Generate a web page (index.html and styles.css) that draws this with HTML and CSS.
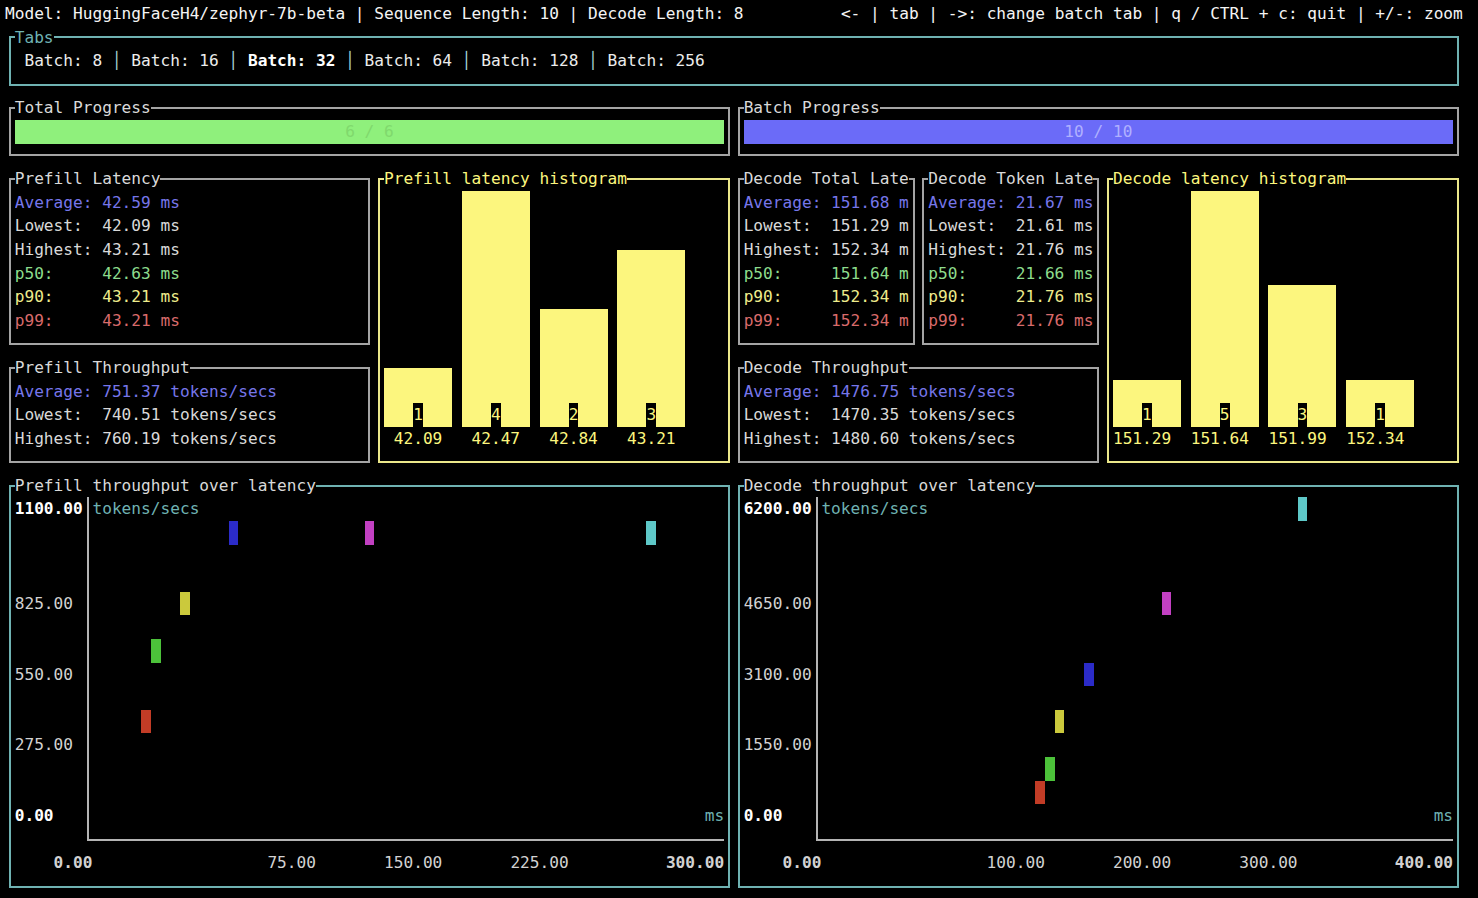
FILE: index.html
```html
<!DOCTYPE html>
<html lang="en">
<head>
<meta charset="utf-8">
<title>text-generation-benchmark</title>
<link rel="stylesheet" href="styles.css">
</head>
<body>
<div class="term">
  <div class="header">
    <span>Model: HuggingFaceH4/zephyr-7b-beta | Sequence Length: 10 | Decode Length: 8</span>
    <span>&lt;- | tab | -&gt;: change batch tab | q / CTRL + c: quit | +/-: zoom</span>
  </div>

  <section class="box teal tabs">
    <div class="title">Tabs</div>
    <div class="line"> Batch: 8 <span class="div">│</span> Batch: 16 <span class="div">│</span> <b class="sel">Batch: 32</b> <span class="div">│</span> Batch: 64 <span class="div">│</span> Batch: 128 <span class="div">│</span> Batch: 256 </div>
  </section>

  <section class="box total-prog">
    <div class="title">Total Progress</div>
    <div class="gauge green">6 / 6</div>
  </section>

  <section class="box batch-prog">
    <div class="title">Batch Progress</div>
    <div class="gauge blue">10 / 10</div>
  </section>

  <section class="box p-lat">
    <div class="title">Prefill Latency</div>
    <div class="line avg">Average: 42.59 ms</div>
    <div class="line">Lowest:  42.09 ms</div>
    <div class="line">Highest: 43.21 ms</div>
    <div class="line p50">p50:     42.63 ms</div>
    <div class="line p90">p90:     43.21 ms</div>
    <div class="line p99">p99:     43.21 ms</div>
  </section>

  <section class="box p-thr">
    <div class="title">Prefill Throughput</div>
    <div class="line avg">Average: 751.37 tokens/secs</div>
    <div class="line">Lowest:  740.51 tokens/secs</div>
    <div class="line">Highest: 760.19 tokens/secs</div>
  </section>

  <section class="box yellow p-hist">
    <div class="title">Prefill latency histogram</div>
    <div class="hist">
      <div class="hcol"><div class="harea"><div class="hbar" style="height:59px"><span class="hval">1</span></div></div><div class="hlabel l5">42.09</div></div>
      <div class="hcol"><div class="harea"><div class="hbar" style="height:236px"><span class="hval">4</span></div></div><div class="hlabel l5">42.47</div></div>
      <div class="hcol"><div class="harea"><div class="hbar" style="height:118px"><span class="hval">2</span></div></div><div class="hlabel l5">42.84</div></div>
      <div class="hcol"><div class="harea"><div class="hbar" style="height:177px"><span class="hval">3</span></div></div><div class="hlabel l5">43.21</div></div>
    </div>
  </section>

  <section class="box d-tot">
    <div class="title">Decode Total Late</div>
    <div class="line avg">Average: 151.68 m</div>
    <div class="line">Lowest:  151.29 m</div>
    <div class="line">Highest: 152.34 m</div>
    <div class="line p50">p50:     151.64 m</div>
    <div class="line p90">p90:     152.34 m</div>
    <div class="line p99">p99:     152.34 m</div>
  </section>

  <section class="box d-tok">
    <div class="title">Decode Token Late</div>
    <div class="line avg">Average: 21.67 ms</div>
    <div class="line">Lowest:  21.61 ms</div>
    <div class="line">Highest: 21.76 ms</div>
    <div class="line p50">p50:     21.66 ms</div>
    <div class="line p90">p90:     21.76 ms</div>
    <div class="line p99">p99:     21.76 ms</div>
  </section>

  <section class="box d-thr">
    <div class="title">Decode Throughput</div>
    <div class="line avg">Average: 1476.75 tokens/secs</div>
    <div class="line">Lowest:  1470.35 tokens/secs</div>
    <div class="line">Highest: 1480.60 tokens/secs</div>
  </section>

  <section class="box yellow d-hist">
    <div class="title">Decode latency histogram</div>
    <div class="hist">
      <div class="hcol"><div class="harea"><div class="hbar" style="height:47.2px"><span class="hval">1</span></div></div><div class="hlabel">151.29</div></div>
      <div class="hcol"><div class="harea"><div class="hbar" style="height:236px"><span class="hval">5</span></div></div><div class="hlabel">151.64</div></div>
      <div class="hcol"><div class="harea"><div class="hbar" style="height:141.6px"><span class="hval">3</span></div></div><div class="hlabel">151.99</div></div>
      <div class="hcol"><div class="harea"><div class="hbar" style="height:47.2px"><span class="hval">1</span></div></div><div class="hlabel">152.34</div></div>
    </div>
  </section>

  <section class="box teal p-chart">
    <div class="title plain">Prefill throughput over latency</div>
    <div class="plot">
      <div class="ylab strong r1">1100.00</div>
      <div class="unit-y">tokens/secs</div>
      <div class="ylab r5">825.00</div>
      <div class="ylab r8">550.00</div>
      <div class="ylab r11">275.00</div>
      <div class="ylab strong r14">0.00</div>
      <div class="yaxis"></div>
      <div class="xaxis"></div>
      <div class="unit-x">ms</div>
      <div class="xlab strong" style="grid-column:5 / span 4">0.00</div>
      <div class="xlab" style="grid-column:27 / span 5">75.00</div>
      <div class="xlab" style="grid-column:39 / span 6">150.00</div>
      <div class="xlab" style="grid-column:52 / span 6">225.00</div>
      <div class="xlab strong" style="grid-column:68 / span 6">300.00</div>
      <div class="pt red" style="grid-area:10 / 14"></div>
      <div class="pt grn" style="grid-area:7 / 15"></div>
      <div class="pt ylw" style="grid-area:5 / 18"></div>
      <div class="pt blu" style="grid-area:2 / 23"></div>
      <div class="pt mag" style="grid-area:2 / 37"></div>
      <div class="pt cyn" style="grid-area:2 / 66"></div>
    </div>
  </section>

  <section class="box teal d-chart">
    <div class="title plain">Decode throughput over latency</div>
    <div class="plot">
      <div class="ylab strong r1">6200.00</div>
      <div class="unit-y">tokens/secs</div>
      <div class="ylab r5">4650.00</div>
      <div class="ylab r8">3100.00</div>
      <div class="ylab r11">1550.00</div>
      <div class="ylab strong r14">0.00</div>
      <div class="yaxis"></div>
      <div class="xaxis"></div>
      <div class="unit-x">ms</div>
      <div class="xlab strong" style="grid-column:5 / span 4">0.00</div>
      <div class="xlab" style="grid-column:26 / span 6">100.00</div>
      <div class="xlab" style="grid-column:39 / span 6">200.00</div>
      <div class="xlab" style="grid-column:52 / span 6">300.00</div>
      <div class="xlab strong" style="grid-column:68 / span 6">400.00</div>
      <div class="pt red" style="grid-area:13 / 31"></div>
      <div class="pt grn" style="grid-area:12 / 32"></div>
      <div class="pt ylw" style="grid-area:10 / 33"></div>
      <div class="pt blu" style="grid-area:8 / 36"></div>
      <div class="pt mag" style="grid-area:5 / 44"></div>
      <div class="pt cyn" style="grid-area:1 / 58"></div>
    </div>
  </section>
</div>
</body>
</html>
```

FILE: styles.css
```css
:root {
  --cw: 9.72px;
  --rh: 23.6px;
  --gray: #a4a4a4;
  --teal: #6fb2b2;
  --yel: #fcf67e;
  --txt: #d9d9d9;
}

html, body {
  margin: 0;
  background: #000;
}

body {
  font-family: "DejaVu Sans Mono", "Liberation Mono", monospace;
  font-size: 16.15px;
  line-height: var(--rh);
  color: var(--txt);
  overflow: hidden;
}

.term {
  display: grid;
  grid-template-columns: repeat(150, var(--cw));
  grid-template-rows: repeat(38, var(--rh));
  padding: 2px 0 0 5px;
  width: 1478px;
  height: 898px;
  box-sizing: border-box;
  overflow: hidden;
}

.header {
  grid-column: 1 / -1;
  grid-row: 1;
  display: flex;
  justify-content: space-between;
  white-space: pre;
  color: #f4f4f4;
}

/* boxes (terminal blocks) */
.box {
  position: relative;
  display: flex;
  flex-direction: column;
  padding: 0 var(--cw);
  min-width: 0;
  min-height: 0;
  --bc: var(--gray);
  --tc: var(--txt);
}
.box::before {
  content: "";
  position: absolute;
  top: calc(var(--rh) / 2 - 1px);
  bottom: calc(var(--rh) / 2 - 1px);
  left: calc(var(--cw) / 2 - 1px);
  right: calc(var(--cw) / 2 - 1px);
  border: 2px solid var(--bc);
}
.box.teal { --bc: var(--teal); --tc: var(--teal); }
.box.yellow { --bc: #ebe78a; --tc: var(--yel); }

.title {
  position: relative;
  z-index: 1;
  align-self: flex-start;
  height: var(--rh);
  background: #000;
  white-space: pre;
  color: var(--tc);
}
.title.plain { color: var(--txt); }

.line {
  position: relative;
  z-index: 1;
  height: var(--rh);
  white-space: pre;
  overflow: hidden;
}
.avg { color: #7676ea; }
.p50 { color: #8ddc8d; }
.p90 { color: #eeec8c; }
.p99 { color: #d96b6b; }

/* grid placement */
.tabs { grid-column: 1 / 151; grid-row: 2 / 5; }
.tabs .line { color: #ececec; }
.tabs .div { color: #a6d6d6; }
.tabs .sel { font-weight: bold; color: #ffffff; }

.total-prog { grid-column: 1 / 76; grid-row: 5 / 8; }
.batch-prog { grid-column: 76 / 151; grid-row: 5 / 8; }

.p-lat { grid-column: 1 / 39; grid-row: 8 / 16; }
.p-thr { grid-column: 1 / 39; grid-row: 16 / 21; }
.p-hist { grid-column: 39 / 76; grid-row: 8 / 21; }
.d-tot { grid-column: 76 / 95; grid-row: 8 / 16; }
.d-tok { grid-column: 95 / 114; grid-row: 8 / 16; }
.d-thr { grid-column: 76 / 114; grid-row: 16 / 21; }
.d-hist { grid-column: 114 / 151; grid-row: 8 / 21; }
.p-chart { grid-column: 1 / 76; grid-row: 21 / 39; }
.d-chart { grid-column: 76 / 151; grid-row: 21 / 39; }

/* gauges */
.gauge {
  position: relative;
  z-index: 1;
  height: var(--rh);
  text-align: center;
  white-space: pre;
}
.gauge.green { background: #8ff07c; color: #80d96d; }
.gauge.blue { background: #6b6bf8; color: #b0b0ff; }

/* histograms */
.hist {
  position: relative;
  z-index: 1;
  display: flex;
  gap: var(--cw);
}
.hcol {
  width: calc(var(--cw) * 7);
  display: flex;
  flex-direction: column;
}
.harea {
  height: calc(var(--rh) * 10);
  display: flex;
  align-items: flex-end;
}
.hbar {
  width: 100%;
  background: var(--yel);
  display: flex;
  justify-content: center;
  align-items: flex-end;
}
.hval {
  width: var(--cw);
  height: var(--rh);
  background: #000;
  color: var(--yel);
  text-align: center;
}
.hlabel {
  height: var(--rh);
  white-space: pre;
  color: var(--yel);
}
.hlabel.l5 { padding-left: var(--cw); }

/* charts */
.plot {
  position: relative;
  z-index: 1;
  display: grid;
  grid-template-columns: repeat(73, var(--cw));
  grid-template-rows: repeat(16, var(--rh));
}
.ylab {
  grid-column: 1 / span 7;
  white-space: pre;
  color: #d2d2d2;
}
.r1 { grid-row: 1; }
.r5 { grid-row: 5; }
.r8 { grid-row: 8; }
.r11 { grid-row: 11; }
.r14 { grid-row: 14; }
.strong { font-weight: bold; color: #ffffff; }
.unit-y {
  grid-column: 9 / span 11;
  grid-row: 1;
  color: var(--teal);
  white-space: pre;
}
.unit-x {
  grid-column: 72 / span 2;
  grid-row: 14;
  color: var(--teal);
  white-space: pre;
}
.yaxis {
  grid-column: 8;
  grid-row: 1 / 16;
  justify-self: start;
  width: 0;
  margin-left: calc(var(--cw) / 2 - 1px);
  margin-bottom: calc(var(--rh) / 2 - 1px);
  border-left: 2px solid #b4b4b4;
}
.xaxis {
  grid-column: 8 / 74;
  grid-row: 15;
  align-self: start;
  height: 0;
  margin-top: calc(var(--rh) / 2 - 1px);
  margin-left: calc(var(--cw) / 2 - 1px);
  border-top: 2px solid #b4b4b4;
}
.xlab {
  grid-row: 16;
  white-space: pre;
  color: #d2d2d2;
}
.pt { width: 100%; height: 100%; }
.pt.red { background: #c23c26; }
.pt.grn { background: #4cc23a; }
.pt.ylw { background: #cbc93c; }
.pt.blu { background: #2b2bc8; }
.pt.mag { background: #c240c2; }
.pt.cyn { background: #5ec8c8; }
```
